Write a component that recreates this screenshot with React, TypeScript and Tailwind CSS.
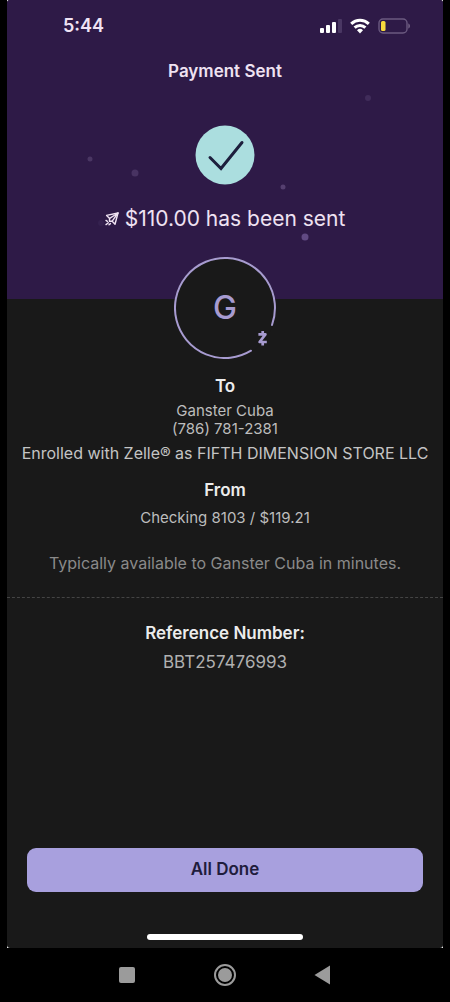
const confetti = [
  { x: 83, y: 159, size: 5, color: "#4a3663" },
  { x: 128, y: 173, size: 7, color: "#483362" },
  { x: 94, y: 223, size: 6, color: "#35214f" },
  { x: 276, y: 187, size: 5, color: "#553f6f" },
  { x: 298, y: 237, size: 7, color: "#614a83" },
  { x: 361, y: 98, size: 6, color: "#402c5a" },
]

function Confetti() {
  return (
    <svg
      viewBox="0 0 436 299"
      className="absolute inset-0 h-full w-full"
      aria-hidden="true"
    >
      {confetti.map((dot) => (
        <circle
          key={`${dot.x}-${dot.y}`}
          cx={dot.x}
          cy={dot.y}
          r={dot.size / 2}
          fill={dot.color}
        />
      ))}
    </svg>
  )
}

function StatusBar() {
  return (
    <div className="flex h-[52px] items-center justify-between pl-14 pr-8">
      <span className="text-lg font-semibold text-[#f0e3f4]">5:44</span>
      <div className="flex items-center gap-2">
        <svg width="22" height="16" viewBox="0 0 22 16" aria-hidden="true">
          <rect x="0" y="10" width="4" height="5" rx="1" fill="#fff" />
          <rect x="6" y="7" width="4" height="8" rx="1" fill="#fff" />
          <rect x="12" y="4" width="4" height="11" rx="1" fill="#fff" />
          <rect x="18" y="1" width="4" height="14" rx="1" fill="#4a3763" />
        </svg>
        <svg width="20" height="16" viewBox="0 0 20 16" aria-hidden="true">
          <g fill="none" stroke="#fff" strokeWidth="3">
            <path d="M1.2 5.8a12.8 12.8 0 0 1 17.6 0" />
            <path d="M4.6 9.6a7.8 7.8 0 0 1 10.8 0" />
          </g>
          <path d="M10 15.4 7 12.2a4.4 4.4 0 0 1 6 0Z" fill="#fff" />
        </svg>
        <svg width="33" height="16" viewBox="0 0 33 16" aria-hidden="true">
          <rect
            x="1"
            y="1"
            width="28"
            height="14"
            rx="4"
            fill="none"
            stroke="#6b5a80"
            strokeWidth="1.4"
          />
          <rect x="3" y="3" width="4.5" height="10" rx="1.5" fill="#f7d93c" />
          <path d="M30.5 5.5c1.6.4 1.6 4.6 0 5Z" fill="#8c7d9d" />
        </svg>
      </div>
    </div>
  )
}

function SendIcon() {
  return (
    <svg
      width="14"
      height="14"
      viewBox="0 0 14 14"
      fill="none"
      stroke="#efe2f2"
      strokeWidth="1.4"
      strokeLinejoin="round"
      strokeLinecap="round"
      aria-hidden="true"
    >
      <path d="M13 1 1.6 3.4 4.6 6.4 4.4 9.2 7.2 9.2 10 12.2Z" />
      <path d="M13 1 4.6 6.4M13 1 7.2 9.2" />
      <path d="M1 8.4 2.4 9.4M1 12.6 3.4 10.8M4 12.8 5.4 11.6" />
    </svg>
  )
}

function Avatar() {
  return (
    <div className="relative mx-auto -mt-[42px] flex size-[102px] items-center justify-center rounded-full bg-[#191919]">
      <svg
        viewBox="0 0 102 102"
        className="absolute inset-0"
        fill="none"
        stroke="#a79bd0"
        aria-hidden="true"
      >
        <path
          d="M77 93.7A50 50 0 1 1 98 68"
          strokeWidth="2"
          strokeLinecap="round"
        />
        <path
          d="M84.4 77.4H91.4L85.6 85H92.8M88.7 74v3.4M88.7 85v3.4"
          strokeWidth="2.7"
          strokeLinejoin="round"
        />
      </svg>
      <span className="text-[32px] font-medium leading-8 text-[#a79bd0]">G</span>
    </div>
  )
}

function NavBar() {
  return (
    <nav className="flex h-[54px] items-center justify-center gap-[74px] bg-black">
      <button type="button" aria-label="Recent apps">
        <svg width="24" height="24" viewBox="0 0 24 24">
          <rect x="4" y="4" width="16" height="16" rx="2" fill="#9b9b9b" />
        </svg>
      </button>
      <button type="button" aria-label="Home">
        <svg width="24" height="24" viewBox="0 0 24 24">
          <circle cx="12" cy="12" r="10" fill="none" stroke="#9b9b9b" strokeWidth="2" />
          <circle cx="12" cy="12" r="7" fill="#9b9b9b" />
        </svg>
      </button>
      <button type="button" aria-label="Back">
        <svg width="24" height="24" viewBox="0 0 24 24">
          <path d="M19 2.5v19L3.5 12Z" fill="#9b9b9b" />
        </svg>
      </button>
    </nav>
  )
}

export default function App() {
  return (
    <div className="flex min-h-screen flex-col bg-black font-['Inter',sans-serif]">
      <div className="mx-[7px] flex flex-1 flex-col bg-white">
        <main className="flex flex-1 flex-col overflow-hidden rounded-[3px] bg-[#191919] text-center">
          <header className="relative bg-[#2e1a47] pb-[66px]">
            <Confetti />
            <div className="relative">
              <StatusBar />
              <h1 className="text-[17px] font-semibold leading-[38px] text-[#efe2f2]">
                Payment Sent
              </h1>
              <svg
                width="60"
                height="60"
                viewBox="0 0 60 60"
                className="mx-auto mt-[35px]"
                aria-hidden="true"
              >
                <circle cx="30" cy="30" r="29.5" fill="#abdedf" />
                <path
                  d="M15 32.5 26 43.5 47 17.5"
                  fill="none"
                  stroke="#1d1f3d"
                  strokeWidth="3"
                  strokeLinecap="round"
                />
              </svg>
              <p className="mt-5 flex items-center justify-center gap-1.5 text-[21px] leading-7 text-[#efe2f2]">
                <SendIcon />
                $110.00 has been sent
              </p>
            </div>
          </header>

          <Avatar />

          <section className="mt-[15px]">
            <h2 className="text-[17px] font-semibold leading-6 text-[#ececec]">To</h2>
            <p className="mt-1 text-[15px] leading-[18px] text-[#bdbdbd]">Ganster Cuba</p>
            <p className="text-[15px] leading-[18px] text-[#bdbdbd]">(786) 781-2381</p>
            <p className="mt-[3px] whitespace-nowrap text-base leading-6 text-[#c4c4c4]">
              Enrolled with Zelle® as FIFTH DIMENSION STORE LLC
            </p>
          </section>

          <section className="mt-[13px]">
            <h2 className="text-[17px] font-semibold leading-6 text-[#ececec]">From</h2>
            <p className="mt-[7px] text-[15px] leading-[18px] text-[#bdbdbd]">
              Checking 8103 / $119.21
            </p>
          </section>

          <p className="mt-6 text-base leading-6 text-[#8a8a8a]">
            Typically available to Ganster Cuba in minutes.
          </p>

          <section className="mt-[22px] border-t border-dashed border-[#444] pt-[23px]">
            <h2 className="text-[17px] font-semibold leading-6 text-[#ececec]">
              Reference Number:
            </h2>
            <p className="mt-[5px] text-[17px] leading-6 text-[#b0b0b0]">
              BBT257476993
            </p>
          </section>

          <div className="mt-auto px-5">
            <button
              type="button"
              className="h-11 w-full rounded-[9px] bg-[#a8a0de] text-[17px] font-semibold text-[#201c3c]"
            >
              All Done
            </button>
          </div>
          <div className="mx-auto mb-2 mt-[42px] h-1.5 w-[156px] rounded-full bg-white" />
        </main>
      </div>
      <NavBar />
    </div>
  )
}
